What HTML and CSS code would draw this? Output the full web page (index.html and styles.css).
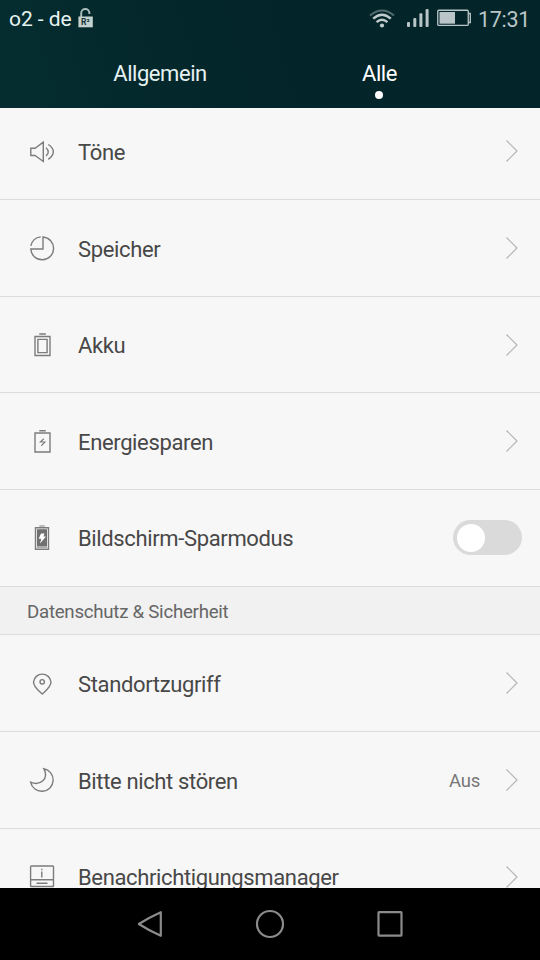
FILE: index.html
```html
<!DOCTYPE html>
<html lang="de">
<head>
<meta charset="utf-8">
<title>Einstellungen</title>
<link rel="stylesheet" href="styles.css">
</head>
<body>
<div class="phone">
  <header class="header">
    <div class="status">
      <span class="carrier">o2 - de</span>
      <svg class="lock" width="16" height="20" viewBox="0 0 16 20">
        <path d="M3.2 9V5.2a4.1 4.1 0 0 1 8.2 0V6" fill="none" stroke="#a9bcbb" stroke-width="2"/>
        <rect x=".4" y="8.5" width="14.4" height="10.8" fill="#c3d1cf"/>
        <text x="3" y="17.3" class="lock-text">R²</text>
      </svg>
      <span class="spacer"></span>
      <svg class="wifi" width="28" height="20" viewBox="0 0 28 20" fill="none" stroke-width="2">
        <path d="M2 6.5Q14-3.500 26 6.500" stroke="#536d6f"/>
        <path d="M5.200 9.700Q14 1.800 22.800 9.700M8.600 13.200Q14 8.200 19.400 13.200" stroke="#c0cccc" stroke-width="2.400"/>
        <circle cx="14" cy="16.500" r="2.100" fill="#c0cccc"/>
      </svg>
      <svg class="signal" width="22" height="20" viewBox="0 0 22 20" fill="#b9c5c6">
        <rect x="0" y="14" width="3" height="5" rx="1"/><rect x="6.300" y="10" width="3" height="9" rx="1"/>
        <rect x="12.400" y="5.300" width="3" height="13.700" rx="1"/><rect x="18.600" y="1" width="3" height="18" rx="1"/>
      </svg>
      <svg class="battery" width="34" height="18" viewBox="0 0 34 18">
        <rect x=".75" y="1.250" width="30.500" height="15.200" rx="1" fill="none" stroke="#b9c5c6" stroke-width="1.300"/>
        <rect x="2.500" y="3" width="15.500" height="11.700" fill="#b9c5c6"/>
        <path d="M31 4.500h2.300v9H31" fill="none" stroke="#b9c5c6" stroke-width="1.300"/>
      </svg>
      <span class="clock">17:31</span>
    </div>
    <nav class="tabs">
      <span class="tab tab-general">Allgemein</span>
      <span class="tab tab-all">Alle<i class="dot"></i></span>
    </nav>
  </header>

  <main class="viewport">
    <div class="row">
      <svg class="icon" viewBox="0 0 32 32"><path d="M4.800 13.200H9l8.300-6v19.300L9 20.500H4.800zM20 12.700q4.500 4.200 0 8.400M22.300 9.500c6.700 4.200 6.700 10.400 0 14.800"/></svg>
      <span class="label">Töne</span>
      <svg class="chevron" viewBox="0 0 14 24"><path d="M1.500 1.500 12 12 1.500 22.500"/></svg>
    </div>
    <div class="row">
      <svg class="icon" viewBox="0 0 32 32"><path d="M17 5A11.400 11.400 0 1 1 4.800 17H17zM4.900 13.800A11.500 11.500 0 0 1 14.700 4.900"/></svg>
      <span class="label">Speicher</span>
      <svg class="chevron" viewBox="0 0 14 24"><path d="M1.500 1.500 12 12 1.500 22.500"/></svg>
    </div>
    <div class="row row-short">
      <svg class="icon" viewBox="0 0 32 32"><path d="M9 7.500h15v19H9zM11.900 10.400h9.200v13.200h-9.200zM13.300 5h6.500"/></svg>
      <span class="label label-high">Akku</span>
      <svg class="chevron" viewBox="0 0 14 24"><path d="M1.500 1.500 12 12 1.500 22.500"/></svg>
    </div>
    <div class="row">
      <svg class="icon" viewBox="0 0 32 32"><path d="M9 8h15v19H9zM13.300 5.700h6.500"/><path class="thin" d="M17.800 13.800 14.500 17h4.300l-3.500 3.800"/></svg>
      <span class="label">Energiesparen</span>
      <svg class="chevron" viewBox="0 0 14 24"><path d="M1.500 1.500 12 12 1.500 22.500"/></svg>
    </div>
    <div class="row">
      <svg class="icon" viewBox="0 0 32 32"><path d="M9.500 5.700h13v21.600h-13z"/><path class="solid" d="M11 7.200h10v17.300H11z"/><path class="faint" d="M11 24.500h10v1.500H11zM13.300 3.300h5.500v1.500h-5.500z"/><path class="bolt" d="M15 11.500h3.500l-1 3H20l-6 7 1.300-4.700H12.700z"/></svg>
      <span class="label label-high">Bildschirm-Sparmodus</span>
      <span class="toggle"><i class="knob"></i></span>
    </div>
    <h2 class="section">Datenschutz &amp; Sicherheit</h2>
    <div class="row">
      <svg class="icon" viewBox="0 0 32 32"><path d="M16.200 27C12.500 23.500 7.500 20 7.500 15a8.800 8.800 0 0 1 17.500 0c0 5-5 8.500-8.800 12z"/><circle cx="16.200" cy="14.800" r="2.200"/></svg>
      <span class="label">Standortzugriff</span>
      <svg class="chevron" viewBox="0 0 14 24"><path d="M1.500 1.500 12 12 1.500 22.500"/></svg>
    </div>
    <div class="row">
      <svg class="icon" viewBox="0 0 32 32"><path d="M17.800 4.700A11.400 11.400 0 1 1 4.600 18.200C14 22.200 23.500 15 17.800 4.700z"/></svg>
      <span class="label">Bitte nicht stören</span>
      <span class="value">Aus</span>
      <svg class="chevron" viewBox="0 0 14 24"><path d="M1.500 1.500 12 12 1.500 22.500"/></svg>
    </div>
    <div class="row">
      <svg class="icon" viewBox="0 0 32 32"><rect x="4.600" y="5" width="22.900" height="20.500" rx=".8"/><path d="M4.600 18.800h22.900M10.500 22.300h11M15.800 10.500v6M15.800 7.800v1.400"/></svg>
      <span class="label label-high">Benachrichtigungsmanager</span>
      <svg class="chevron" viewBox="0 0 14 24"><path d="M1.500 1.500 12 12 1.500 22.500"/></svg>
    </div>
  </main>

  <footer class="navbar">
    <svg width="30" height="30" viewBox="0 0 30 30"><path d="M25.800 3.200v23.600Q14 21.500 3.800 15 14 8.500 25.800 3.200z" stroke-linejoin="round"/></svg>
    <svg width="30" height="30" viewBox="0 0 30 30"><circle cx="15" cy="15" r="13"/></svg>
    <svg width="30" height="30" viewBox="0 0 30 30"><rect x="3.500" y="3.200" width="23" height="23.400" rx=".5"/></svg>
  </footer>
</div>
</body>
</html>
```

FILE: styles.css
```css
* { box-sizing: border-box; }

body {
  margin: 0;
  font-family: Roboto, "Liberation Sans", sans-serif;
}

.phone {
  display: flex;
  flex-direction: column;
  width: 540px;
  height: 960px;
  overflow: hidden;
  background: #f7f7f7;
}

.header {
  flex: none;
  height: 108px;
  color: #e6f2f1;
  background: linear-gradient(75deg, #052d30 0%, #03262a 40%, #03252a 100%);
}

.status {
  display: flex;
  align-items: flex-start;
  height: 38px;
  padding: 0 10px 0 9px;
  line-height: 39px;
}

.carrier { width: 69px; font-size: 21px; letter-spacing: -.05px; white-space: nowrap; }
.lock { margin-top: 8px; }
.lock-text { font: bold 8.500px Roboto, sans-serif; fill: #173438; }
.spacer { flex: 1; }
.wifi { margin: 9px 11px 0 0; }
.signal { margin: 8px 8px 0 0; }
.battery { margin: 9px 7px 0 0; }
.clock { width: 52px; font-size: 21.500px; letter-spacing: -.3px; color: #b9c5c6; text-align: right; white-space: nowrap; }

.tabs {
  display: grid;
  grid-template-columns: 1fr 1fr;
  height: 70px;
  padding: 0 47px 0 53px;
  line-height: 71px;
  font-size: 22px;
  letter-spacing: -.45px;
}

.tab { position: relative; justify-self: center; }
.tab-general { margin-right: 6px; }
.tab-all { color: #fff; margin-right: 7px; }

.dot {
  position: absolute;
  left: 50%;
  top: 53px;
  width: 8px;
  height: 8px;
  margin-left: -4px;
  border-radius: 50%;
  background: #fff;
}

.viewport {
  flex: 1;
  min-height: 0;
  overflow: hidden;
}

.row {
  display: flex;
  align-items: flex-start;
  height: 97px;
  padding: 0 22px 0 26px;
  border-bottom: 1px solid #dcdcdc;
}

.row:first-child { margin-top: -5px; }
.row-short { height: 96px; }

.icon {
  flex: none;
  width: 32px;
  height: 32px;
  margin: 32px 20px 0 0;
  fill: none;
  stroke: #7c7c7c;
  stroke-width: 1.400px;
}

.icon .thin { stroke-width: 1.200px; }
.icon .solid { fill: #707070; stroke: none; }
.icon .faint { fill: #aaa; stroke: none; }
.icon .bolt { fill: #fff; stroke: none; }

.label {
  flex: 1;
  font-size: 22px;
  line-height: 99px;
  letter-spacing: -.36px;
  color: #484848;
  white-space: nowrap;
}

.label-high { line-height: 97px; }

.value {
  margin-right: 25px;
  font-size: 18.500px;
  line-height: 99px;
  letter-spacing: -.2px;
  color: #777;
}

.chevron {
  flex: none;
  width: 14px;
  height: 24px;
  margin-top: 36px;
  margin-right: -1px;
  fill: none;
  stroke: #b4b4b4;
  stroke-width: 1.200px;
}

.toggle {
  width: 69px;
  height: 35px;
  margin: 30px -4px 0 0;
  padding: 3.500px;
  border-radius: 18px;
  background: #dadada;
}

.knob {
  display: block;
  width: 28px;
  height: 28px;
  border-radius: 50%;
  background: #fff;
}

.section {
  height: 48px;
  margin: 0;
  padding-left: 27px;
  border-bottom: 1px solid #dcdcdc;
  background: #f1f1f1;
  font-size: 18.700px;
  letter-spacing: -.27px;
  font-weight: 400;
  line-height: 51px;
  color: #666;
}

.navbar {
  display: flex;
  flex: none;
  align-items: center;
  justify-content: center;
  gap: 90px;
  height: 72px;
  background: #000;
}

.navbar svg {
  fill: none;
  stroke: #8b8b8b;
  stroke-width: 2.200px;
}
```
